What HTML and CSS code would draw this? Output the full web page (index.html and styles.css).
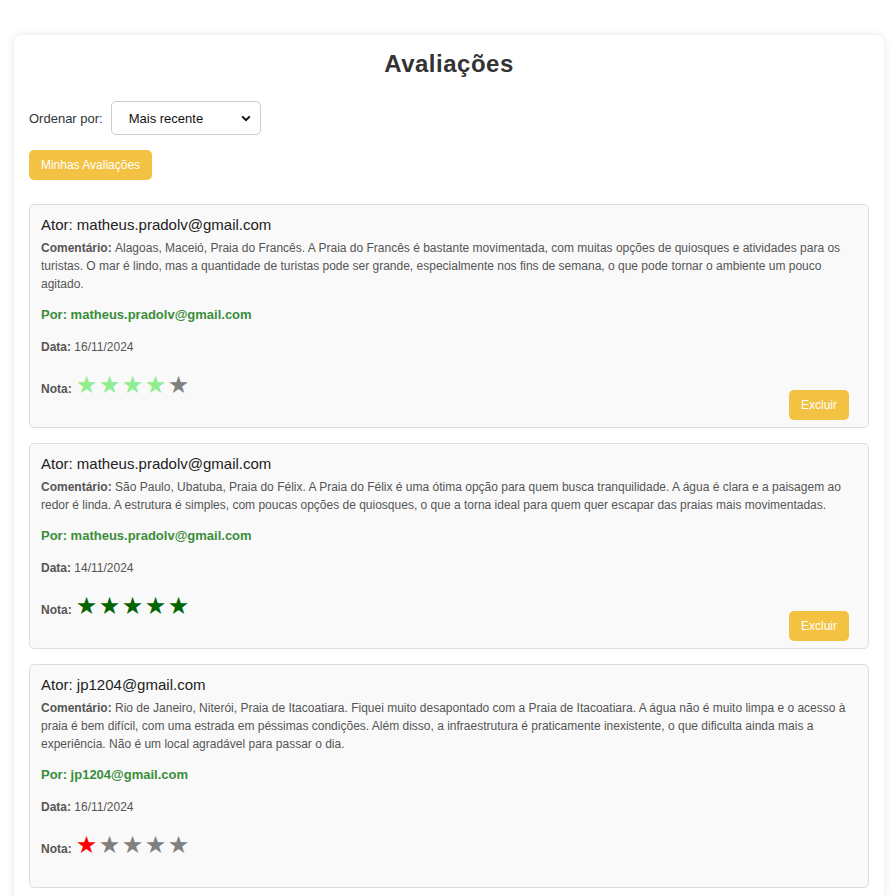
FILE: index.html
```html
<!DOCTYPE html>
<html lang="pt-BR">
<head>
<meta charset="utf-8">
<title>Avaliações</title>
<link rel="stylesheet" href="styles.css">
</head>
<body>
<div class="container">
  <h2 class="title">Avaliações</h2>
  <div class="filter">
    <label class="filter-label" for="ordem">Ordenar por:</label>
    <div class="select-wrap">
      <select id="ordem" class="select">
        <option>Mais recente</option>
        <option>Mais antiga</option>
        <option>Melhor nota</option>
        <option>Pior nota</option>
      </select>
      <svg class="chevron" width="10" height="7" viewBox="0 0 10 7"><path d="M1.2 1.4 L5 5.2 L8.8 1.4" fill="none" stroke="#111" stroke-width="2"/></svg>
    </div>
  </div>
  <button class="btn btn-mine">Minhas Avaliações</button>

  <div class="list">
    <div class="card">
      <div class="ator">Ator: matheus.pradolv@gmail.com</div>
      <p class="comment"><b>Comentário: </b>Alagoas, Maceió, Praia do Francês. A Praia do Francês é bastante movimentada, com muitas opções de quiosques e atividades para os turistas. O mar é lindo, mas a quantidade de turistas pode ser grande, especialmente nos fins de semana, o que pode tornar o ambiente um pouco agitado.</p>
      <p class="por">Por: matheus.pradolv@gmail.com</p>
      <p class="data"><b>Data: </b>16/11/2024</p>
      <div class="footer">
        <div class="nota"><b>Nota:</b><span class="stars"><span class="star light">★</span><span class="star light">★</span><span class="star light">★</span><span class="star light">★</span><span class="star off">★</span></span></div>
        <button class="btn btn-del">Excluir</button>
      </div>
    </div>

    <div class="card">
      <div class="ator">Ator: matheus.pradolv@gmail.com</div>
      <p class="comment"><b>Comentário: </b>São Paulo, Ubatuba, Praia do Félix. A Praia do Félix é uma ótima opção para quem busca tranquilidade. A água é clara e a paisagem ao redor é linda. A estrutura é simples, com poucas opções de quiosques, o que a torna ideal para quem quer escapar das praias mais movimentadas.</p>
      <p class="por">Por: matheus.pradolv@gmail.com</p>
      <p class="data"><b>Data: </b>14/11/2024</p>
      <div class="footer">
        <div class="nota"><b>Nota:</b><span class="stars"><span class="star dark">★</span><span class="star dark">★</span><span class="star dark">★</span><span class="star dark">★</span><span class="star dark">★</span></span></div>
        <button class="btn btn-del">Excluir</button>
      </div>
    </div>

    <div class="card">
      <div class="ator">Ator: jp1204@gmail.com</div>
      <p class="comment"><b>Comentário: </b>Rio de Janeiro, Niterói, Praia de Itacoatiara. Fiquei muito desapontado com a Praia de Itacoatiara. A água não é muito limpa e o acesso à praia é bem difícil, com uma estrada em péssimas condições. Além disso, a infraestrutura é praticamente inexistente, o que dificulta ainda mais a experiência. Não é um local agradável para passar o dia.</p>
      <p class="por">Por: jp1204@gmail.com</p>
      <p class="data"><b>Data: </b>16/11/2024</p>
      <div class="footer">
        <div class="nota"><b>Nota:</b><span class="stars"><span class="star red">★</span><span class="star off">★</span><span class="star off">★</span><span class="star off">★</span><span class="star off">★</span></span></div>
      </div>
    </div>
  </div>
</div>
</body>
</html>
```

FILE: styles.css
```css
* { box-sizing: border-box; }

body {
  margin: 0;
  background: #ffffff;
  font-family: "Liberation Sans", Arial, sans-serif;
  color: #333;
}

.container {
  width: 870px;
  margin: 35px 0 30px 14px;
  padding: 15px;
  background: #fff;
  border-radius: 8px;
  box-shadow: 0 0 10px rgba(0, 0, 0, 0.1);
}

.title {
  margin: 0 0 23px;
  font-size: 24px;
  line-height: 28px;
  letter-spacing: 0.5px;
  text-align: center;
  color: #333;
}

.filter {
  display: flex;
  align-items: center;
  gap: 8px;
  height: 34px;
}

.filter-label {
  font-size: 13px;
  color: #333;
}

.select-wrap {
  position: relative;
  width: 150px;
  height: 34px;
}

.select {
  appearance: none;
  -webkit-appearance: none;
  width: 150px;
  height: 34px;
  padding: 0 20px 0 17px;
  border: 1px solid #ccc;
  border-radius: 5px;
  background: #fff;
  font-family: "Liberation Sans", Arial, sans-serif;
  font-size: 13px;
  color: #111;
}

.chevron {
  position: absolute;
  right: 10px;
  top: 14px;
  pointer-events: none;
}

.btn {
  border: none;
  border-radius: 5px;
  background: #f3c242;
  color: #fff;
  font-family: "Liberation Sans", Arial, sans-serif;
  font-size: 12px;
  line-height: 14px;
  padding: 8px 11px;
  cursor: pointer;
}

.btn-mine {
  display: block;
  margin-top: 15px;
  width: 123px;
  padding: 8px 0;
}

.list {
  margin-top: 24px;
  display: flex;
  flex-direction: column;
  gap: 15px;
}

.card {
  background: #f9f9f9;
  border: 1px solid #ddd;
  border-radius: 5px;
  padding: 10px 10px 7px 11px;
}

.ator {
  font-size: 15px;
  line-height: 18px;
  color: #222;
  margin-top: 1px;
  margin-bottom: 5px;
}

.comment {
  margin: 0;
  font-size: 12px;
  line-height: 18px;
  color: #555;
}

.por {
  margin: 14px 0 0;
  font-size: 13px;
  line-height: 16px;
  font-weight: bold;
  color: #3a8d3a;
}

.data {
  margin: 16px 0 0;
  font-size: 12px;
  line-height: 16px;
  color: #555;
}

.footer {
  margin-top: 20px;
  min-height: 45px;
  display: flex;
  justify-content: space-between;
  align-items: flex-start;
}

.nota {
  display: flex;
  align-items: center;
  height: 28px;
  font-size: 12px;
  color: #555;
}

.stars {
  margin-left: 4px;
  margin-bottom: 8px;
  display: flex;
}

.star {
  display: inline-block;
  width: 23px;
  font-family: "DejaVu Sans", sans-serif;
  font-size: 24px;
  line-height: 1;
}

.star.light { color: #90ee90; }
.star.dark { color: #006400; }
.star.red { color: #ff0000; }
.star.off { color: #808080; }

.btn-del {
  align-self: flex-end;
  width: 60px;
  padding: 8px 0;
  margin-right: 9px;
}
```
